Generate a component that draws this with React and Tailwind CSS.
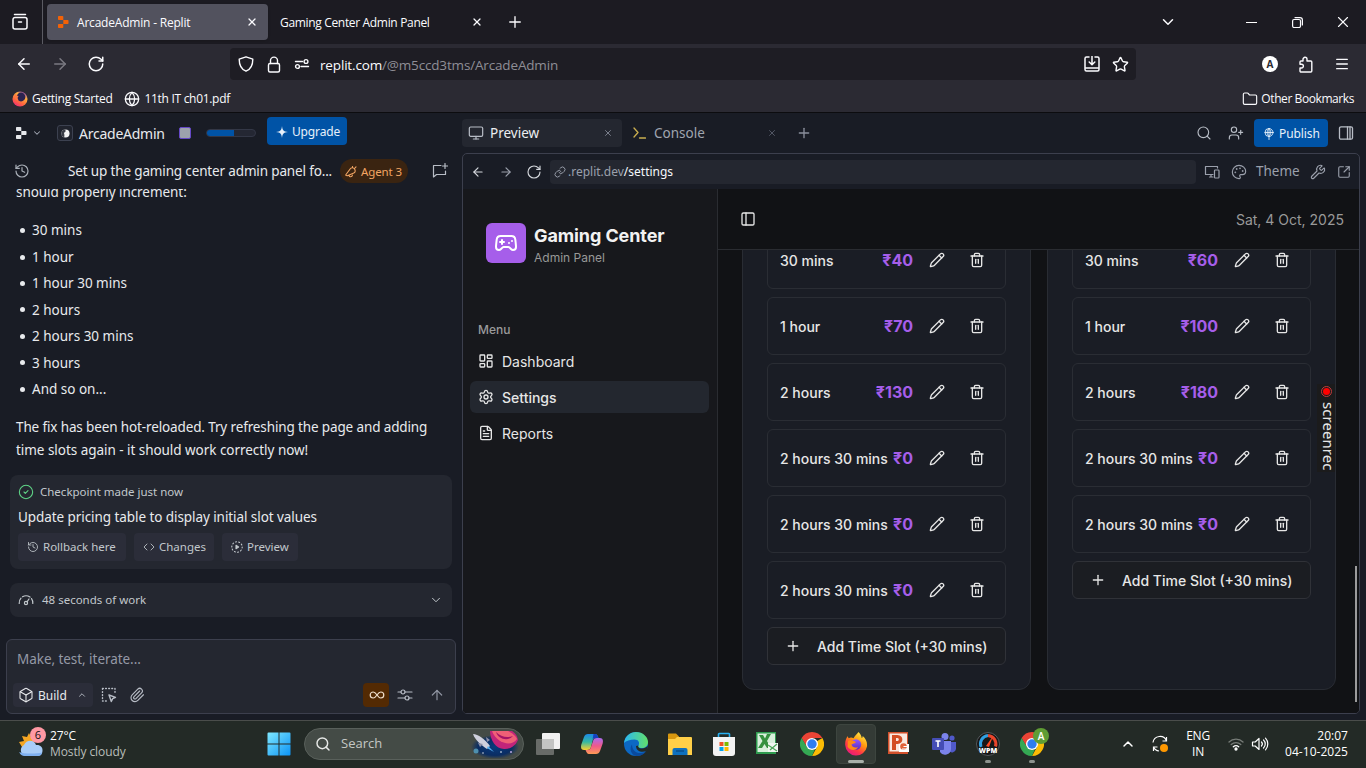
import React from "react";
import {
  ArrowLeft, ArrowRight, ArrowUp, Box, ChevronDown, ChevronUp, CircleCheck, Code, FileText, Folder,
  Gamepad2, Globe, History, LayoutDashboard, Link, Menu, Monitor, Palette, PanelLeft, Paperclip,
  Pencil, Plus, RotateCw, Search, Settings, SquareArrowOutUpRight, Star, Trash2, UserPlus, Wrench, X,
} from "lucide-react";

const Svg = ({ children, className, box = "0 0 24 24", sw = 1.5 }) => (
  <svg viewBox={box} className={className} fill="none" stroke="currentColor" strokeWidth={sw} strokeLinecap="round" strokeLinejoin="round">
    {children}
  </svg>
);

const ReplitLogo = ({ className }) => (
  <svg viewBox="0 0 11 12" className={className} fill="currentColor">
    <path d="M.8 0h3.700a.8.8 0 0 1 .8.8V4H.8a.8.8 0 0 1-.8-.8V.8A.8.8 0 0 1 .8 0ZM5.300 4h4.400a.8.8 0 0 1 .8.8v2.400a.8.8 0 0 1-.8.8H5.300ZM.8 8h4.500v3.200a.8.8 0 0 1-.8.8H.8a.8.8 0 0 1-.8-.8V8.800A.8.8 0 0 1 .8 8Z" />
  </svg>
);

function TabStrip() {
  return (
    <div className="flex h-11 items-center bg-[#1c1b22]">
      <div className="flex h-full w-[43px] items-center border-r border-[#5b5b63] pl-[11px] text-[#fbfbfe]">
        <Svg className="h-[18px] w-[18px]" box="0 0 18 18" sw={1.5}>
          <path d="M3.500 1.500h11M4 4.500h10a2 2 0 0 1 2 2v7.500a2 2 0 0 1-2 2H4a2 2 0 0 1-2-2V6.500a2 2 0 0 1 2-2ZM7.500 9h3" />
        </Svg>
      </div>
      <div className="ml-1 flex h-9 w-[221px] items-center rounded bg-[#52525e] text-[#fbfbfe] shadow">
        <ReplitLogo className="ml-[11px] h-3 w-[11px] text-[#f26207]" />
        <span className="ml-2 w-[169px] whitespace-nowrap pt-px font-['Open_Sans'] text-[12px] tracking-[-0.2px]">ArcadeAdmin - Replit</span>
        <X className="h-3 w-3" strokeWidth={2.500} />
      </div>
      <span className="ml-3 w-[191px] whitespace-nowrap pt-px font-['Open_Sans'] text-[12px] tracking-[-0.33px] text-[#fbfbfe]">Gaming Center Admin Panel</span>
      <X className="h-3 w-3 text-[#fbfbfe]" strokeWidth={2.500} />
      <Plus className="ml-[23px] h-[18px] w-[18px] text-[#fbfbfe]" strokeWidth={1.800} />
      <div className="ml-auto flex items-center text-[#fbfbfe]">
        <ChevronDown className="mr-[69px] h-[18px] w-[18px]" strokeWidth={2} />
        <span className="mr-[35px] h-px w-[11px] bg-white" />
        <Svg className="mr-[31px] h-[11px] w-[11px]" box="0 0 11 11" sw={1.200}>
          <path d="M2 2.500h5A1.500 1.500 0 0 1 8.500 4v5A1.500 1.500 0 0 1 7 10.500H2A1.500 1.500 0 0 1 .600 9V4A1.500 1.500 0 0 1 2 2.500ZM3 .600h5a2.400 2.400 0 0 1 2.400 2.400v5" />
        </Svg>
        <X className="mr-[14px] h-[18px] w-[18px]" strokeWidth={1.500} />
      </div>
    </div>
  );
}

function Toolbar() {
  return (
    <div className="flex h-10 items-center bg-[#2b2a33] text-[#fbfbfe]">
      <ArrowLeft className="ml-[15px] h-[18px] w-[18px]" strokeWidth={2} />
      <ArrowRight className="ml-[18px] h-[18px] w-[18px] text-[#7b7a82]" strokeWidth={2} />
      <RotateCw className="ml-[18px] h-[18px] w-[18px]" strokeWidth={2} />
      <div className="ml-[125px] flex h-8 w-[906px] items-center rounded bg-[#1e1d24]">
        <Svg className="ml-2 h-4 w-4" box="0 0 16 16" sw={1.400}>
          <path d="M8 .800 14.800 3.200c0 6-1.800 10-6.800 12C3 13.200 1.200 9.200 1.200 3.200Z" />
        </Svg>
        <Svg className="ml-3 h-[17px] w-4" box="0 0 16 17" sw={1.400}>
          <rect x="2.500" y="7.500" width="11" height="8.500" rx="1.500" /><path d="M4.500 7.500V4.600a3.500 3.500 0 0 1 7 0v2.900" />
        </Svg>
        <Svg className="ml-3 h-4 w-4" box="0 0 16 16" sw={1.400}>
          <path d="M1.500 5.500h7M7 10.500h7.500" /><circle cx="12" cy="5.500" r="1.900" /><circle cx="3.500" cy="10.500" r="1.900" />
        </Svg>
        <span className="ml-[10px] whitespace-nowrap pt-[2px] font-['Open_Sans'] text-[13.5px] tracking-[-0.16px]">
          replit.com<span className="text-[#8f8e96]">/@m5ccd3tms/ArcadeAdmin</span>
        </span>
        <Svg className="ml-auto h-4 w-4" box="0 0 16 16" sw={1.500}>
          <path d="M5 1H2.500A1.500 1.500 0 0 0 1 2.500v11A1.500 1.500 0 0 0 2.500 15h11a1.500 1.500 0 0 0 1.500-1.500v-11A1.500 1.500 0 0 0 13.500 1H11M1 12h14M8 0v8.500M5.200 6 8 8.700 10.800 6" />
        </Svg>
        <Star className="ml-3 mr-[7px] h-[17px] w-[17px]" strokeWidth={2} />
      </div>
      <div className="ml-auto flex items-center">
        <span className="flex h-4 w-4 items-center justify-center rounded-full bg-white font-['Open_Sans'] text-[10px] font-bold text-[#2b2a33]">A</span>
        <Svg className="ml-5 h-[17px] w-4" box="0 0 16 17" sw={1.400}>
          <path d="M5 5V3.300a2 2 0 0 1 4 0V5h3.800a1 1 0 0 1 1 1v9a1 1 0 0 1-1 1H3a1 1 0 0 1-1-1v-3h1.500a1.900 1.900 0 0 0 0-3.800H2V6a1 1 0 0 1 1-1Z" />
        </Svg>
        <Menu className="ml-5 mr-4 h-4 w-4" strokeWidth={2} />
      </div>
    </div>
  );
}

function Bookmarks() {
  return (
    <div className="flex h-7 items-center bg-[#2b2a33] pt-px font-['Open_Sans'] text-[12px] text-[#fbfbfe]">
      <FirefoxIcon className="ml-3 h-4 w-4" plain />
      <span className="ml-1 whitespace-nowrap pt-px tracking-[-0.29px]">Getting Started</span>
      <Globe className="ml-3 h-4 w-4" strokeWidth={1.900} />
      <span className="ml-1 whitespace-nowrap pt-px tracking-[-0.3px]">11th IT ch01.pdf</span>
      <Folder className="ml-auto h-4 w-4" strokeWidth={1.700} />
      <span className="ml-[3px] mr-3 whitespace-nowrap pt-px tracking-[-0.42px]">Other Bookmarks</span>
    </div>
  );
}

const slots = ["30 mins", "1 hour", "1 hour 30 mins", "2 hours", "2 hours 30 mins", "3 hours", "And so on..."];

const SmallButton = ({ icon, label, className }) => (
  <div className={"flex h-7 items-center gap-1 whitespace-nowrap rounded bg-[#2b2d39] pl-[9px] text-[11.5px] text-[#c2c8cc] " + className}>
    {icon}
    <span>{label}</span>
  </div>
);

function ChatPane() {
  return (
    <div className="flex w-[456px] flex-none flex-col font-['Noto_Sans'] text-[#e8eaed]">
      <div className="flex h-10 items-center">
        <ReplitLogo className="ml-4 h-3 w-[11px] text-[#e5e7eb]" />
        <ChevronDown className="ml-[5px] h-[10px] w-[10px] text-[#a3a8b4]" strokeWidth={2.500} />
        <span className="ml-[15px] flex h-4 w-4 items-center justify-center rounded-[3px] border border-[#3c4150] bg-[#20232d]">
          <svg viewBox="0 0 10 10" className="h-[9px] w-[9px]"><circle cx="5" cy="5" r="4.500" fill="#f5f5f5" /><path d="M5 .500a4.500 4.500 0 0 0-1 8.900C3 8 4.500 7 3.500 5.500 3 4 4.200 3.500 5 3Z" fill="#3a3d46" /></svg>
        </span>
        <span className="ml-[6px] w-[100px] whitespace-nowrap text-[14px] tracking-[-0.25px]">ArcadeAdmin</span>
        <span className="h-3 w-3 rounded-[2px] border-[1.500px] border-[#6548c7] bg-[#9da2ad]" />
        <span className="ml-[15px] flex h-2 w-[50px] overflow-hidden rounded border border-[#333746] bg-[#242733]"><span className="h-full w-[27px] bg-[#0053a6]" /></span>
        <span className="ml-[11px] mb-1 flex h-7 w-20 items-center rounded bg-[#0053a6] pl-[9px] pt-px text-[12px] tracking-[-0.15px] text-[#e6f0fa]">
          <svg viewBox="0 0 12 12" className="mr-1 h-3 w-3 flex-none" fill="currentColor"><path d="M6 0c.4 3.700 1.300 5.600 6 6-4.700.4-5.600 2.300-6 6-.4-3.700-1.300-5.600-6-6 4.700-.4 5.600-2.300 6-6Z" /></svg>
          Upgrade
        </span>
      </div>
      <div className="flex h-9 items-center">
        <History className="ml-[14px] h-4 w-4 text-[#a9afb8]" strokeWidth={1.800} />
        <span className="ml-[38px] w-[272px] whitespace-nowrap pt-px text-[13.5px] tracking-[-0.15px]">Set up the gaming center admin panel fo...</span>
        <span className="flex h-6 w-[68px] items-center whitespace-nowrap rounded-full bg-[#3a2411] pl-[5px] pt-px text-[11.5px] tracking-[-0.1px] text-[#f2a563]">
          <Svg className="mr-1 h-3 w-3 flex-none" box="0 0 12 12" sw={1.100}><path d="M1 8.500 5.500 2.500c1-1.200 3-1 4 .4s1 3.600-.7 4.200L3 9.500c-1 .4-2.600.2-2-1ZM4 9.500c.5 1.800 3 1.800 3.400-.4M9.500 2.500 11 .800M7.500 1.500V.500" /></Svg>
          Agent 3
        </span>
        <Svg className="ml-6 h-4 w-4 text-[#b8bdc6]" box="0 0 16 16" sw={1.200}><path d="M9 2.500H1.500V14l3-2.500h9V8M13 .500v5M10.500 3h5" /></Svg>
      </div>
      <div className="flex h-[286px] flex-col overflow-hidden px-4 text-[13.500px]">
        <p className="-mt-2 h-[23px] leading-[23px] tracking-[-0.05px]">should properly increment:</p>
        <ul className="mt-[13.400px]">
          {slots.map((s) => (
            <li key={s} className="flex h-[26.45px] items-center"><span className="ml-[4px] mr-[7px] h-[5px] w-[5px] rounded-full bg-[#e8eaed]" />{s}</li>
          ))}
        </ul>
        <p className="mt-[13.600px] whitespace-nowrap leading-[23px]"><span className="tracking-[-0.13px]">The fix has been hot-reloaded. Try refreshing the page and adding</span><br /><span className="tracking-[-0.04px]">time slots again - it should work correctly now!</span></p>
      </div>
      <div className="ml-[10px] mr-1 flex h-[94px] flex-none flex-col rounded-lg bg-[#242730] px-2">
        <div className="mt-[9px] flex h-4 items-center text-[11.5px] text-[#c2c8cc]">
          <CircleCheck className="mr-[6px] h-4 w-4 text-[#5fd487]" strokeWidth={1.600} />Checkpoint made just now
        </div>
        <div className="mt-[7px] h-5 text-[13.500px] leading-5 tracking-[-0.07px]">Update pricing table to display initial slot values</div>
        <div className="mt-[6px] flex gap-2">
          <SmallButton className="w-[108px]" icon={<History className="h-3 w-3" strokeWidth={1.700} />} label="Rollback here" />
          <SmallButton className="w-20" icon={<Code className="h-3 w-3" strokeWidth={1.700} />} label="Changes" />
          <SmallButton className="w-[76px]" icon={<Svg className="h-3 w-3" box="0 0 12 12" sw={1.100}><circle cx="6" cy="6" r="5.200" strokeDasharray="1 2.200" /><path d="m5 4.300 2.600 1.700L5 7.700Z" fill="currentColor" /></Svg>} label="Preview" />
        </div>
      </div>
      <div className="ml-[10px] mr-1 mt-[14px] flex h-[34px] flex-none items-center rounded-lg bg-[#242730] text-[11.500px] text-[#c2c8cc]">
        <Svg className="ml-2 mr-2 h-4 w-4" box="0 0 16 16" sw={1.200}><path d="M1.200 11.500A7 7 0 0 1 3 6.200M4.500 4.800a7 7 0 0 1 7.500.3M13.500 6.600a7 7 0 0 1 1.300 4.900M9 9.800l2-2.800" /><circle cx="8" cy="11" r="1.600" /></Svg>
        48 seconds of work
        <ChevronDown className="ml-auto mr-[9px] h-[14px] w-[14px]" strokeWidth={1.700} />
      </div>
      <div className="ml-[6px] mt-[22px] flex h-[75px] flex-none flex-col rounded-md border border-[#3c3f4d] bg-[#242730]">
        <div className="ml-[10px] mt-[7px] h-6 text-[13.500px] leading-6 tracking-[-0.05px] text-[#9599a6]">Make, test, iterate...</div>
        <div className="ml-[6px] mt-[12px] flex h-6 items-center">
          <span className="flex h-6 w-20 items-center rounded bg-[#2b2d39] pl-[5px] text-[12px]">
            <Box className="mr-1 h-4 w-4" strokeWidth={1.600} /><span className="w-[39px] pt-px">Build</span><ChevronUp className="h-[10px] w-[10px] text-[#b8bdc6]" strokeWidth={2.200} />
          </span>
          <Svg className="ml-[8px] h-4 w-4 text-[#b8bdc6]" box="0 0 16 16" sw={1.400}><path d="M1.500 1.500h12.500v5M1.500 1.500v12.500h5" strokeDasharray=".8 2.300" /><path d="m8 8 6.500 2.300-2.800 1.300L10.300 14.500Z" /></Svg>
          <Paperclip className="ml-3 h-4 w-4 text-[#b8bdc6]" strokeWidth={1.700} />
          <span className="ml-auto mr-2 flex h-6 w-[26px] items-center justify-center rounded bg-[#532a03] text-[#f0dfcc]">
            <Svg className="ml-px h-4 w-4" box="0 0 16 16" sw={1.200}><path d="M8 8C6.500 5.800 5.500 5 4.200 5a3 3 0 0 0 0 6C5.500 11 6.500 10.200 8 8s2.500-3 3.800-3a3 3 0 0 1 0 6C10.500 11 9.500 10.200 8 8Z" /></Svg>
          </span>
          <Svg className="h-4 w-4 text-[#b8bdc6]" box="0 0 16 16" sw={1.200}><path d="M1 5h3M8 5h7M1 11h7M12 11h3" /><circle cx="6" cy="5" r="2" /><circle cx="10" cy="11" r="2" /></Svg>
          <ArrowUp className="ml-4 mr-[10px] h-4 w-4 text-[#8f94a1]" strokeWidth={1.800} />
        </div>
      </div>
    </div>
  );
}

function PaneTabs() {
  return (
    <div className="flex h-10 items-center font-['Noto_Sans'] text-[13.500px]">
      <div className="flex h-7 w-40 items-center rounded bg-[#242730] text-[#eceef0]">
        <Monitor className="ml-[6px] mr-[6px] h-4 w-4 text-[#b8bdc6]" strokeWidth={1.800} />
        <span className="w-[113px]">Preview</span>
        <X className="h-[10px] w-[10px] text-[#8a8f9c]" strokeWidth={2} />
      </div>
      <Svg className="ml-[11px] h-3 w-[13px] text-[#c9ae4f]" box="0 0 13 12" sw={1.300}><path d="m1 1 4 4.500L1 10M6.500 11h6" /></Svg>
      <span className="ml-2 w-[113px] text-[#a0a5b0]">Console</span>
      <X className="h-[10px] w-[10px] text-[#5d6270]" strokeWidth={2} />
      <Plus className="ml-[19px] h-4 w-4 text-[#8a8f9c]" strokeWidth={2} />
      <Search className="ml-auto h-4 w-4 text-[#b8bdc6]" strokeWidth={1.700} />
      <UserPlus className="ml-4 h-4 w-4 text-[#b8bdc6]" strokeWidth={1.700} />
      <span className="ml-[10px] flex h-7 w-[74px] items-center rounded bg-[#0053a6] pl-[9px] pt-px text-[12px] tracking-[-0.1px] text-[#e6f0fa]">
        <Svg className="mr-1 h-3 w-3 flex-none" box="0 0 12 12" sw={0.900}><circle cx="6" cy="4.500" r="4" /><path d="M2 4.500h8M6 .500v11M6 .500C3.500 3 3.500 6 6 8.500M6 .500C8.500 3 8.500 6 6 8.500" /></Svg>
        Publish
      </span>
      <Svg className="ml-[10px] mr-[6px] h-4 w-4 text-[#b8bdc6]" box="0 0 16 16" sw={1.300}><rect x="1.500" y="1.800" width="13" height="12.400" rx="1.500" /><path d="M9.500 2v12M12 2v12" /></Svg>
    </div>
  );
}

function PreviewBar() {
  return (
    <div className="flex h-[35px] flex-none items-center font-['Noto_Sans'] text-[#9ba0ac]">
      <ArrowLeft className="ml-[8px] h-[14px] w-[14px] text-[#d5d8dd]" strokeWidth={2} />
      <ArrowRight className="ml-[14px] h-[14px] w-[14px]" strokeWidth={2} />
      <RotateCw className="ml-[13px] h-4 w-4 text-[#d5d8dd]" strokeWidth={1.700} />
      <div className="ml-2 flex h-6 w-[646px] items-center rounded bg-[#242730]">
        <Link className="ml-[4px] h-3 w-3" strokeWidth={1.900} />
        <span className="ml-[2px] pt-px text-[12px]">.replit.dev<span className="text-[#f5f9fc]">/settings</span></span>
      </div>
      <Svg className="ml-2 h-4 w-4" box="0 0 16 16" sw={1.200}><path d="M9 10.500H1.500v-8h12V4M5.500 13H9M7 10.500V13" /><rect x="10.500" y="6" width="4.500" height="8" rx=".8" /></Svg>
      <Palette className="ml-[11px] h-4 w-4" strokeWidth={1.700} />
      <span className="ml-[9px] w-[46px] text-[13.500px]">Theme</span>
      <Wrench className="ml-[8px] h-4 w-4" strokeWidth={1.700} />
      <SquareArrowOutUpRight className="ml-[11px] h-[14px] w-[14px]" strokeWidth={1.900} />
    </div>
  );
}

const NavItem = ({ Icon, label, active }) => (
  <div className={"flex h-8 items-center gap-2 rounded-md pl-2 text-[14px] " + (active ? "bg-[#23272f] font-medium" : "")}>
    <Icon className="h-4 w-4" strokeWidth={2} />
    {label}
  </div>
);

function PriceCard({ rows }) {
  return (
    <div className="-mt-16 flex w-[289px] flex-none flex-col gap-2 rounded-xl border border-[#292c33] bg-[#1a1d25] px-6 pt-11">
      {rows.map(([label, price], i) => (
        <div key={i} className="flex h-[58px] flex-none items-center justify-between rounded-md border border-[#2a2d34] px-3">
          <span className="whitespace-nowrap text-[14px] font-medium">{label}</span>
          <span className="flex items-center gap-2">
            <span className="text-[16px] font-bold text-[#a65eea]">{price}</span>
            <span className="flex w-8 justify-center"><Pencil className="h-4 w-4" strokeWidth={2} /></span>
            <span className="flex w-8 justify-center"><Trash2 className="h-4 w-4" strokeWidth={2} /></span>
          </span>
        </div>
      ))}
      <div className="flex h-[38px] flex-none items-center rounded-md border border-[#303238] bg-[#1b1d22] text-[14px] font-medium">
        <Plus className="ml-[17px] mr-4 h-4 w-4" strokeWidth={2} />
        <span className="whitespace-nowrap">Add Time Slot (+30 mins)</span>
      </div>
    </div>
  );
}

const left = [["30 mins", "₹40"], ["1 hour", "₹70"], ["2 hours", "₹130"], ["2 hours 30 mins", "₹0"], ["2 hours 30 mins", "₹0"], ["2 hours 30 mins", "₹0"]];
const right = [["30 mins", "₹60"], ["1 hour", "₹100"], ["2 hours", "₹180"], ["2 hours 30 mins", "₹0"], ["2 hours 30 mins", "₹0"]];

function GamingApp() {
  return (
    <div className="flex min-h-0 flex-1 overflow-hidden rounded-b bg-[#111215] font-['Inter'] text-[#e6e6e6]">
      <aside className="flex w-[255px] flex-none flex-col border-r border-[#2a2c31] bg-[#17181c] pl-[7px] pr-2">
        <div className="mt-[34px] flex pl-4">
          <span className="mr-2 flex h-10 w-10 flex-none items-center justify-center rounded-md bg-[#a65eea] text-white">
            <Gamepad2 className="h-6 w-6" strokeWidth={2} />
          </span>
          <div className="pt-[1px]">
            <div className="whitespace-nowrap text-[18px] font-bold leading-6 tracking-[-0.1px] text-[#f2f2f2]">Gaming Center</div>
            <div className="mt-[1px] text-[12px] leading-[18px] text-[#989898]">Admin Panel</div>
          </div>
        </div>
        <div className="mt-[47px] h-8 pl-2 text-[12px] font-medium leading-8 text-[#9a9a9b]">Menu</div>
        <nav className="-mt-px flex flex-col gap-1">
          <NavItem Icon={LayoutDashboard} label="Dashboard" />
          <NavItem Icon={Settings} label="Settings" active />
          <NavItem Icon={FileText} label="Reports" />
        </nav>
      </aside>
      <main className="flex min-w-0 flex-1 flex-col">
        <header className="flex h-[61px] flex-none items-center justify-between border-b border-[#2a2c31] pl-[22px] pr-[15px]">
          <PanelLeft className="h-4 w-4" strokeWidth={2} />
          <span className="text-[14px] text-[#999999]">Sat, 4 Oct, 2025</span>
        </header>
        <div className="flex min-h-0 flex-1 overflow-hidden">
          <div className="ml-6 flex h-[440px] flex-none gap-4">
            <PriceCard rows={left} />
            <PriceCard rows={right} />
          </div>
          <span className="ml-[19px] mt-[316px] h-[136px] w-[2px] flex-none bg-[#9b9b9c]" />
        </div>
      </main>
    </div>
  );
}

function FirefoxIcon({ className, plain }) {
  return (
    <svg viewBox="0 0 24 24" className={className}>
      <defs>
        <linearGradient id="fx" x1=".8" y1="0" x2=".2" y2="1"><stop offset="0" stopColor="#fff44f" /><stop offset=".4" stopColor="#ff980e" /><stop offset=".7" stopColor="#ff3647" /><stop offset="1" stopColor="#e31587" /></linearGradient>
        <linearGradient id="fp" x1="0" y1="0" x2="0" y2="1"><stop offset="0" stopColor="#9059ff" /><stop offset="1" stopColor="#5b2bbd" /></linearGradient>
        <linearGradient id="fr" x1=".8" y1="0" x2=".2" y2="1"><stop offset="0" stopColor="#7b35c9" /><stop offset=".3" stopColor="#ffb13d" /><stop offset=".65" stopColor="#ff6a3d" /><stop offset="1" stopColor="#f0257a" /></linearGradient>
      </defs>
      {plain ? (
        <>
          <circle cx="12" cy="12" r="11.300" fill="url(#fr)" />
          <circle cx="13.500" cy="9" r="6.600" fill="#2b2350" />
          <path d="M5 4c1 3 3 3 5 3.500-2 2-2 4 0 6.500-4 0-8-4-5-10Z" fill="#ff7a45" />
        </>
      ) : (
        <>
          <path d="M14.500 0c2 2 3 4 3.200 6 .8-.4 1-1.200 1-2 3 2.500 4.800 6 4.300 10.500A11 11 0 0 1 1.200 13C1 9.500 1.800 6.500 3.800 4c0 1 .4 1.800 1 2.200 1.500-1 3.400-.8 4.700 0C10.500 4 12.500 2.500 14.500 0Z" fill="url(#fx)" />
          <circle cx="12" cy="12.500" r="5.200" fill="url(#fp)" />
          <path d="M4 9c3-1.500 5 0 8 1-1 1.500-3.500 1.500-4.500 2.500C8 15 11 16.500 14 15c-1.500 4-8.500 4-10.500-.500Z" fill="#ff8a16" />
        </>
      )}
    </svg>
  );
}

const Chrome = () => (
  <svg viewBox="0 0 24 24" className="h-6 w-6">
    <path d="M12 12 22.400 6A12 12 0 0 1 12 24l5-9Z" fill="#fbbc05" />
    <path d="M1.600 6A12 12 0 0 1 12 0a12 12 0 0 1 10.400 6H12l-5.500 8.500Z" fill="#ea4335" />
    <path d="M1.600 6 7 15c2 3 5 3 8 2L12 24A12 12 0 0 1 1.600 6Z" fill="#34a853" />
    <circle cx="12" cy="12" r="6" fill="#fff" /><circle cx="12" cy="12" r="4.700" fill="#2f7df0" />
  </svg>
);

const Cell = ({ children, active, dot }) => (
  <div className="flex w-11 justify-center">
    <div className={"relative flex h-10 w-10 items-center justify-center rounded " + (active ? "border border-[#3d453f] bg-[#343b36]" : "")}>
      {children}
      {active && <span className="absolute bottom-0 h-[3px] w-4 rounded-full bg-[#a9b0aa]" />}
      {dot && <span className="absolute bottom-px h-[3px] w-[6px] rounded-full bg-[#8d938e]" />}
    </div>
  </div>
);

function Taskbar() {
  return (
    <div className="flex h-12 items-center border-t border-[#4a4d4b] bg-[#232a26] pb-px font-['Open_Sans'] text-white">
      <svg viewBox="0 0 28 30" className="-mt-[5px] ml-[18px] h-[30px] w-7 flex-none">
        <path d="m11 6 2 4 5 1-3 6-11 3-3-5 5-1-2-5 5 1Z" fill="#f5a623" />
        <path d="M7 29a6 6 0 0 1-1-11c2-5 10-6 12 0 4-.5 7 2 6.500 6S22 29 19 29Z" fill="#a9cdf8" />
        <path d="M7 29a6 6 0 0 1-5.800-4c4 2 17 2 23 .5C24 28 22 29 19 29Z" fill="#7fb0f0" />
        <circle cx="20" cy="8" r="8" fill="#ff99a4" />
        <text x="20" y="12" textAnchor="middle" fontSize="11" fontFamily="Open Sans" fill="#111">6</text>
      </svg>
      <div className="ml-1 w-[207px] text-[12px] leading-4 tracking-[-0.1px]"><div>27°C</div><div className="text-[#b9beba]">Mostly cloudy</div></div>
      <Cell>
        <svg viewBox="0 0 24 24" className="h-6 w-6"><defs><linearGradient id="wn" x1="0" y1="0" x2="1" y2="1"><stop offset="0" stopColor="#7fe8ff" /><stop offset="1" stopColor="#0c93f5" /></linearGradient></defs><path d="M.500 1.500a1 1 0 0 1 1-1h10v11H.500ZM12.500.500h10a1 1 0 0 1 1 1v10h-11ZM.500 12.500h11v11h-10a1 1 0 0 1-1-1ZM12.500 12.500h11v10a1 1 0 0 1-1 1h-10Z" fill="url(#wn)" /></svg>
      </Cell>
      <div className="ml-[3px] mr-[2px] flex h-8 w-[220px] flex-none items-center rounded-full border border-[#59605b] bg-[#444b46]">
        <Search className="ml-[10px] h-4 w-4 text-[#e6e8e6]" strokeWidth={2.200} />
        <span className="ml-[10px] text-[13px] text-[#c4c8c5]">Search</span>
        <svg viewBox="0 0 50 28" className="ml-auto mr-[2px] h-7 w-[50px]">
          <defs><radialGradient id="sp"><stop offset="0" stopColor="#083a7c" /><stop offset=".7" stopColor="#0a2d63" /><stop offset="1" stopColor="#0a2d63" stopOpacity="0" /></radialGradient></defs>
          <ellipse cx="24" cy="17" rx="24" ry="12" fill="url(#sp)" />
          <path d="M19 1h22a13 13 0 0 1 6 9 14 14 0 0 1-14 9c-8 0-14-9-14-18Z" fill="#c2247a" /><path d="M21 1h16c4 2 8 5 9 8-5 8-20 5-25-8Z" fill="#ef6076" /><path d="M25 2c5 5 11 6 17 4-5 6-15 3-17-4Z" fill="#a51466" />
          <path d="M2 4c5 0 12 5 17 12l-3 3C10 15 4 10 2 4Z" fill="#cfd0dd" /><path d="m7 13 5 1-3 3ZM15 7l1 5 3-2Z" fill="#8d90a8" /><path d="m17 16 6 6-7-4Z" fill="#5ab4f5" />
          <circle cx="5" cy="21" r="2.500" fill="#4e8fae" /><circle cx="30" cy="22" r=".8" fill="#fff" /><circle cx="40" cy="22" r="1" fill="#b7a5e0" /><circle cx="12" cy="23" r=".7" fill="#fff" />
        </svg>
      </div>
      <Cell><svg viewBox="0 0 24 24" className="h-6 w-6"><rect x="6" y="1" width="18" height="16" rx="1" fill="#f1f1f1" /><rect x="0" y="7" width="18" height="16" rx="1" fill="#747774" opacity=".85" /><path d="M6 7h12v10H6Z" fill="#c3c4c3" /></svg></Cell>
      <Cell>
        <svg viewBox="0 0 24 24" className="h-6 w-6">
          <defs><linearGradient id="ca" x1="0" y1="0" x2="0" y2="1"><stop offset="0" stopColor="#1c88e8" /><stop offset=".5" stopColor="#36b9a0" /><stop offset="1" stopColor="#ffd02e" /></linearGradient><linearGradient id="cb" x1="0" y1="0" x2="0" y2="1"><stop offset="0" stopColor="#a96bf0" /><stop offset=".5" stopColor="#f0598b" /><stop offset="1" stopColor="#ff9a54" /></linearGradient></defs>
          <path d="M8 2h7c2 0 3 2 3.500 4h-3c-1.500 0-2.500 1-3 3l-1.500 6c-.6 2-1.500 3-4 3H4c-3 0-3.500-3-2.500-6L4 5c.7-2 2-3 4-3Z" fill="url(#ca)" />
          <path d="M16 22H9c-2 0-2.500-2-3.500-4h2c2 0 3-1 3.500-3l2-6c.6-2 1.500-3 4-3h3c3 0 3.500 3 2.500 6L20 19c-.7 2-2 3-4 3Z" fill="url(#cb)" />
          <path d="M13.500 2H15c2 0 3 2 3.500 4h-3c-1.500 0-2.200.5-3 2Z" fill="#163fc0" />
        </svg>
      </Cell>
      <Cell>
        <svg viewBox="0 0 24 24" className="h-6 w-6">
          <defs><linearGradient id="ea" x1="0" y1="0" x2="1" y2="0"><stop offset="0" stopColor="#2bb7f2" /><stop offset="1" stopColor="#62e06a" /></linearGradient></defs>
          <circle cx="12" cy="12" r="12" fill="#0c68c4" />
          <path d="M0 11C1 4 6 0 12 0c7 0 12 5 12 10 0 4-3 6-6 6-3.500 0-4.500-1-3.500-2.500 1.500-3 0-6-4-6C6 7.500 2 9 0 11Z" fill="url(#ea)" />
          <path d="M8 12.500C8 18 12 21.500 17 21c2 0 4-1 5.500-2-2 3-6 5-10 5C7 23.500 5 16 8 12.500Z" fill="#0a4a9e" />
          <path d="M14.500 13.500c-1 1.500.5 3 3.500 3 2.500 0 4-1 6-2.500l-1.500 5c-5 2-10.500 0-10.500-5Z" fill="#232a26" />
        </svg>
      </Cell>
      <Cell><svg viewBox="0 0 24 24" className="h-6 w-6"><path d="M0 2.500a1 1 0 0 1 1-1h7l3 3v5H0Z" fill="#d7970f" /><path d="M9 5h14a1 1 0 0 1 1 1v17H0V7h7Z" fill="#ffcf48" /><path d="M4.500 23v-5a2 2 0 0 1 2-2h11a2 2 0 0 1 2 2v5Z" fill="#0e70be" /><path d="M8 19h8" stroke="#0a4e8b" strokeWidth="1.500" /></svg></Cell>
      <Cell><svg viewBox="0 0 24 24" className="h-6 w-6"><path d="M6.500 7V2.200a.7.7 0 0 1 .7-.7h9.600a.7.7 0 0 1 .7.7V7" fill="none" stroke="#28b1f2" strokeWidth="1.600" /><path d="M1 5h22v16a3 3 0 0 1-3 3H4a3 3 0 0 1-3-3Z" fill="#f3f3f3" /><path d="M7.500 10h4v4h-4Z" fill="#f05125" /><path d="M12.500 10h4v4h-4Z" fill="#7eb900" /><path d="M7.500 15h4v4h-4Z" fill="#00a3ee" /><path d="M12.500 15h4v4h-4Z" fill="#ffb900" /></svg></Cell>
      <Cell><svg viewBox="0 0 24 24" className="mb-[2px] mr-[2px] h-6 w-6"><path d="M1 1h20v22H1Z" fill="#2e9b4e" /><path d="M2.500 2.500H20v18.500H2.500Z" fill="#d9efdc" /><path d="M4 4h4l2 3.500L12 3h4l-4 7 4 7h-4l-2.500-4L7 17H3l4.500-7Z" fill="#35913f" /><path d="M13 12h10v9H13Z" fill="#f1f6f1" /><path d="m13 14 9 6M22 13l-7 6" stroke="#4ca65a" strokeWidth="1.300" /></svg></Cell>
      <Cell><Chrome /></Cell>
      <Cell active><FirefoxIcon className="h-6 w-6" /></Cell>
      <Cell><svg viewBox="0 0 24 24" className="mb-px mr-[2px] h-6 w-6"><path d="M1 0h20v22H1Z" fill="#d2502b" /><path d="M2.500 1.500h17.500v18H2.500Z" fill="#fae8df" /><path fillRule="evenodd" d="M5 3h5.500c6.500 0 6.500 9 0 9H9v6H5Zm4 3v3h1.500c1.800 0 1.800-3 0-3Z" fill="#d34e24" /><path d="M12 12h10v8H12Z" fill="#fff" /><circle cx="16.500" cy="14.500" r="3.300" fill="#e2633a" /><path d="M16.500 14.500h4M15 17h7" stroke="#fff" /></svg></Cell>
      <Cell><svg viewBox="0 0 24 24" className="mr-px h-6 w-6"><circle cx="13" cy="4.500" r="3.500" fill="#7b83eb" /><circle cx="20" cy="6" r="2.600" fill="#5059c9" /><path d="M17 10h7v7a4 4 0 0 1-7 2Z" fill="#5059c9" /><path d="M8 9h11v8a6 6 0 0 1-11 3Z" fill="#7b83eb" /><rect x="0" y="6" width="12" height="12" rx="1" fill="#454db5" /><path d="M3.500 9h5M6 9v6" stroke="#fff" strokeWidth="1.600" /></svg></Cell>
      <Cell dot><svg viewBox="0 0 24 24" className="h-6 w-6"><circle cx="12" cy="12" r="11.500" fill="#171717" stroke="#55595c" /><path d="M5 15A8.500 8.500 0 0 1 12 3.500" stroke="#2f9fe0" strokeWidth="3" fill="none" /><path d="M12 3.500a8.500 8.500 0 0 1 7.500 11" stroke="#e8452c" strokeWidth="3" fill="none" /><path d="m17 4-7 10 3 1Z" fill="#ff4a22" /><text x="12" y="21" textAnchor="middle" fontSize="7" fontWeight="800" fontFamily="Open Sans" fill="#fff">WPM</text></svg></Cell>
      <Cell dot><Chrome /><span className="absolute right-[3px] top-[4px] flex h-4 w-4 items-center justify-center rounded-full bg-[#5f9d34] text-[10px] font-semibold">A</span></Cell>
      <ChevronUp className="ml-auto h-4 w-4" strokeWidth={2.200} />
      <svg viewBox="0 0 18 18" className="ml-[15px] h-[18px] w-[18px]" fill="none" stroke="#fff" strokeWidth="1.200"><path d="M2 7.500A7 7 0 0 1 15.500 6M15.500 2v4h-4M8 16a7 7 0 0 1-5.500-4M2.500 16v-4h4" /><circle cx="13" cy="13" r="4" fill="#ff9800" stroke="none" /></svg>
      <div className="ml-4 w-[26px] text-center text-[12px] leading-4 tracking-[-0.2px]"><div>ENG</div><div>IN</div></div>
      <Svg className="ml-[17px] h-4 w-4" box="0 0 16 16" sw={1.300}><path d="M1 6a10 10 0 0 1 14 0M3.200 8.500a7 7 0 0 1 9.600 0" stroke="#777c78" /><path d="M5.300 10.800a4 4 0 0 1 5.400 0" /><circle cx="8" cy="13" r="1" fill="#fff" /></Svg>
      <Svg className="ml-[7px] h-4 w-[18px]" box="0 0 18 16" sw={1.200}><path d="M1.500 6h2.700L8 2.500v11L4.200 10H1.500ZM10.500 6a3 3 0 0 1 0 4M12.500 4a5.500 5.500 0 0 1 0 8M14.500 2.200a8.500 8.500 0 0 1 0 11.600" /></Svg>
      <div className="ml-4 mr-[18px] text-right text-[12px] leading-4 tracking-[0.03px]"><div>20:07</div><div>04-10-2025</div></div>
    </div>
  );
}

export default function App() {
  return (
    <div className="relative flex h-[768px] w-[1366px] flex-col overflow-hidden bg-[#191c25]">
      <TabStrip />
      <Toolbar />
      <Bookmarks />
      <div className="flex h-[608px] border-t border-[#0c0c0f] bg-[#191c25]">
        <ChatPane />
        <div className="ml-[6px] flex w-[898px] flex-none flex-col">
          <PaneTabs />
          <div className="flex h-[561px] flex-col rounded-[5px] border border-[#3c3f4d]">
            <PreviewBar />
            <GamingApp />
          </div>
        </div>
      </div>
      <Taskbar />
      <div className="absolute left-[1317px] top-[384px] flex h-[88px] w-[18px] flex-col items-center bg-[#1b1b1c]">
        <span className="mt-[2px] flex h-[11px] w-[11px] flex-none items-center justify-center rounded-full border border-[#c23a3a]"><span className="h-[7px] w-[7px] rounded-full bg-[#ff0000]" /></span>
        <span className="ml-[5px] mt-[5px] font-['Noto_Sans'] text-[15px] leading-[18px] tracking-[0.05px] text-[#e6e6e6] [writing-mode:vertical-rl]">screenrec</span>
      </div>
    </div>
  );
}
